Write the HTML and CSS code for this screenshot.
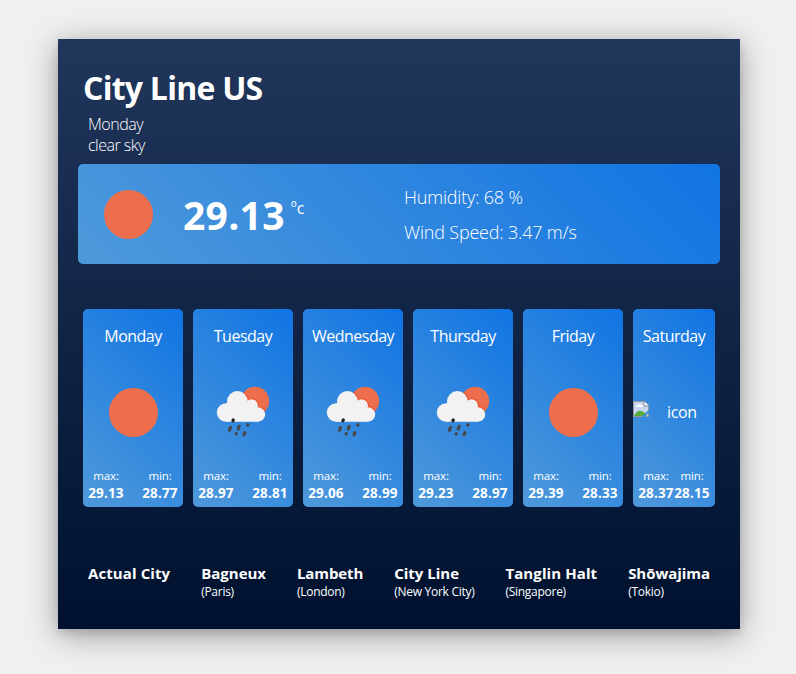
FILE: index.html
```html
<!DOCTYPE html>
<html lang="en">
<head>
<meta charset="utf-8">
<title>Weather</title>
<link rel="stylesheet" href="styles.css">
</head>
<body>
<svg class="defs" width="0" height="0">
  <clipPath id="sun-area"><circle cx="39" cy="15" r="14.2"/></clipPath>
  <symbol id="sun" viewBox="0 0 50 50"><circle cx="25.500" cy="25.500" r="24.5" fill="#ec6e4c"/></symbol>
  <symbol id="rain" viewBox="0 0 54 52">
    <circle cx="39" cy="15" r="14.2" fill="#ec6e4c"/>
    <g clip-path="url(#sun-area)" fill="#ee4f2e"><circle cx="21.400" cy="15.300" r="11.300"/><circle cx="35.500" cy="19.800" r="7.500"/><circle cx="42" cy="28.500" r="8.300"/></g>
    <g fill="#f2f2f2"><circle cx="10" cy="26.500" r="9.200"/><circle cx="21.400" cy="15.500" r="10.400"/><circle cx="35.500" cy="19.800" r="6.500"/><circle cx="42" cy="28.500" r="7.200"/><path d="M10 17.500L21 14l14 4 7 11v6.700H10Z"/></g>
    <g stroke="#484848" stroke-width="3.200" stroke-linecap="round"><path d="M17.300 34l-.4.800" stroke="#222"/><path d="M14.500 41.600l-1 2.600M23.200 40.300l-1 2.800M32 38.700l-.2.500M20.300 47.600l-.2.200M28.900 46.700l-1 2"/></g>
  </symbol>
  <symbol id="broken" viewBox="0 0 16 16">
    <path d="M.5.500h10.500l4.500 4.500v10.500H.5Z" fill="#c5d7f5" stroke="#9a9a9a"/>
    <path d="M11 0v5h5" fill="#fff" stroke="#888"/>
    <path d="M3 6q0-2 2-2 2-2 3 0 2 0 2 2Z" fill="#fff"/>
    <path d="M1 15q3-6 7-5 3 0 6 5Z" fill="#55ad38"/>
    <path d="M8.500 16L16 8.500v3L11.500 16Z" fill="#3e8edb"/>
  </symbol>
</svg>
<main class="weather">
  <header class="heading">
    <h1>City Line US</h1>
    <p>Monday</p>
    <p>clear sky</p>
  </header>
  <section class="current">
    <svg class="sun"><use href="#sun"/></svg>
    <div class="temperature"><strong>29.13</strong><span>ºc</span></div>
    <div class="details"><p class="humidity">Humidity: 68 %</p><p class="wind">Wind Speed: 3.47 m/s</p></div>
  </section>
  <section class="forecast">
    <article class="day"><h2>Monday</h2><div class="icon"><svg class="sun"><use href="#sun"/></svg></div><div class="range"><p>max:<b>29.13</b></p><p>min:<b>28.77</b></p></div></article>
    <article class="day"><h2>Tuesday</h2><div class="icon"><svg class="rain"><use href="#rain"/></svg></div><div class="range"><p>max:<b>28.97</b></p><p>min:<b>28.81</b></p></div></article>
    <article class="day"><h2>Wednesday</h2><div class="icon"><svg class="rain"><use href="#rain"/></svg></div><div class="range"><p>max:<b>29.06</b></p><p>min:<b>28.99</b></p></div></article>
    <article class="day"><h2>Thursday</h2><div class="icon"><svg class="rain"><use href="#rain"/></svg></div><div class="range"><p>max:<b>29.23</b></p><p>min:<b>28.97</b></p></div></article>
    <article class="day"><h2>Friday</h2><div class="icon"><svg class="sun"><use href="#sun"/></svg></div><div class="range"><p>max:<b>29.39</b></p><p>min:<b>28.33</b></p></div></article>
    <article class="day"><h2>Saturday</h2><div class="icon missing"><svg class="broken"><use href="#broken"/></svg><span>icon</span></div><div class="range"><p>max:<b>28.37</b></p><p>min:<b>28.15</b></p></div></article>
  </section>
  <nav class="cities">
    <a class="actual"><b>Actual City</b></a>
    <a class="paris"><b>Bagneux</b><small>(Paris)</small></a>
    <a class="london"><b>Lambeth</b><small>(London)</small></a>
    <a class="newyork"><b>City Line</b><small>(New York City)</small></a>
    <a class="singapore"><b>Tanglin Halt</b><small>(Singapore)</small></a>
    <a class="tokyo"><b>Shōwajima</b><small>(Tokio)</small></a>
  </nav>
</main>
</body>
</html>
```
FILE: styles.css
```css
* { box-sizing: border-box; margin: 0; padding: 0; }
body { background: #f0f0f0; color: #fff; font-family: "Open Sans", "Noto Sans", sans-serif; padding: 39px 56px 0 58px; height: 674px; overflow: hidden; }
.defs { display: block; height: 0; }
svg { flex: none; }
.weather { width: 682px; height: 590px; padding: 25px 20px 0; background: linear-gradient(#20365b, #00112f); box-shadow: 0 4px 8px rgba(0,0,0,.1), 0 6px 30px rgba(0,0,0,.36); }
.heading { height: 100px; padding-left: 5px; white-space: nowrap; }
h1 { font-size: 32px; line-height: 48px; letter-spacing: -.75px; }
.heading p { font-size: 16px; line-height: 21px; font-weight: 300; padding-left: 5px; letter-spacing: -.5px; }
.heading h1 + p { margin-top: 2px; }
.current { height: 100px; border-radius: 5px; background: linear-gradient(45deg, #4f99da, #1074e3); display: flex; align-items: center; padding-left: 25px; }
.sun { width: 50px; height: 50px; display: block; }
.temperature { display: flex; width: 221px; margin: 2px 0 0 30px; white-space: nowrap; }
.temperature strong { font-size: 39px; line-height: 54px; letter-spacing: .3px; }
.temperature span { font-size: 16px; line-height: 18px; margin: 11px 0 0 6px; }
.details { font-size: 18px; line-height: 35px; font-weight: 300; margin-top: 2px; letter-spacing: -.18px; white-space: nowrap; }
.forecast { display: flex; gap: 10px; padding: 0 5px; margin-top: 45px; }
.day { width: 100px; height: 198px; border-radius: 5px; background: linear-gradient(45deg, #4f99da, #1074e3); display: flex; flex-direction: column; }
.day:last-child { width: 82px; }
.day h2 { font-size: 16px; font-weight: 400; line-height: 22px; margin-top: 16px; text-align: center; letter-spacing: -.5px; white-space: nowrap; }
.icon { height: 100px; margin-top: 15px; display: flex; align-items: center; justify-content: center; }
.rain { width: 54px; height: 52px; }
.missing { justify-content: flex-start; font-size: 16px; }
.broken { width: 16px; height: 16px; margin-top: -7px; }
.missing span { margin-left: 18px; letter-spacing: -.4px; }
.range { display: flex; justify-content: space-between; padding: 6px 5px 0; }
.range p { width: 36px; font-size: 11.500px; line-height: 16px; text-align: center; letter-spacing: -.1px; }
.range b { display: block; font-size: 13.500px; line-height: 18px; letter-spacing: .15px; margin: 0 -2px; }
.cities { display: flex; justify-content: space-between; margin: 56px 10px 0; white-space: nowrap; }
.cities b { display: block; font-size: 15px; line-height: 21px; letter-spacing: 0; }
.cities .actual b { letter-spacing: .1px; }
.cities .london b { letter-spacing: -.1px; }
.cities .singapore b { letter-spacing: .1px; }
.cities .tokyo b { letter-spacing: -.05px; }
.cities small { display: block; font-size: 12px; line-height: 16px; letter-spacing: -.27px; }
```
